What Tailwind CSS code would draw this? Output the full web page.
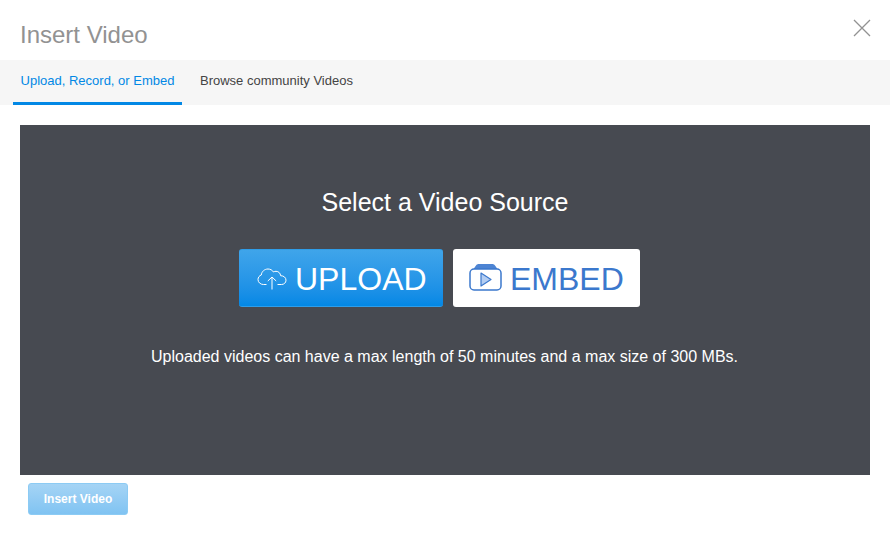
<!DOCTYPE html>
<html>
<head>
<meta charset="utf-8">
<script src="https://cdn.jsdelivr.net/npm/@tailwindcss/browser@4"></script>
</head>
<body class="bg-white font-['Liberation_Sans',Arial,sans-serif]">
<div class="w-[890px] h-[543px] overflow-hidden flex flex-col bg-white">
  <header class="h-[60px] flex justify-between pl-5 pr-[19px]">
    <h1 class="text-[24px] leading-[28px] pt-[21px] text-[#929292]">Insert Video</h1>
    <button class="mt-[19px] w-[18px] h-[18px]" aria-label="Close">
      <svg viewBox="0 0 18 18" class="w-[18px] h-[18px]" fill="none" stroke="#929292" stroke-width="1.3"><path d="M1 1 17 17M17 1 1 17"/></svg>
    </button>
  </header>
  <nav class="h-[45px] bg-[#f6f6f6] flex pl-[13px] text-[13px]">
    <a class="w-[169px] h-[45px] border-b-[3px] border-[#0288e5] text-[#0288e5] flex items-center justify-center pb-[1px]">Upload, Record, or Embed</a>
    <a class="ml-[18px] h-[45px] text-[#444] flex items-center pb-[4px]">Browse community Videos</a>
  </nav>
  <main class="mt-5 mx-5 w-[850px] h-[350px] bg-[#474a51] flex flex-col items-center pt-[62px] text-white">
    <h2 class="text-[25px] leading-[30px]">Select a Video Source</h2>
    <div class="flex gap-[10px] mt-[32px] mr-[11px]">
      <button class="w-[204px] h-[58px] rounded-[3px] border-y border-[#2f9de8] bg-gradient-to-b from-[#3fa5ea] to-[#0288e5] flex items-center pl-[18px] gap-[9px] text-[32px]">
        <svg viewBox="0 0 30 24" class="w-[30px] h-[24px]" fill="none" stroke="#fff" stroke-width="1">
          <path d="M9.5 18.5H6.5C3.5 18.5 1 16.4 1 13.6 1 11.3 2.4 9.6 4.3 9 4.6 5.7 7.4 3 11 3 13.3 3 15.4 4.2 16.5 6 17.300 5.500 18.200 5.300 19 5.300 21.600 5.300 23.500 7.300 23.600 9.700 26.700 9.700 29 11.500 29 14.200 29 16.700 27 18.500 24.500 18.500H20.500"/>
          <path d="M15 23.500V11M10.800 15 15 11 19.200 15"/>
        </svg>
        <span class="pt-[1px] -ml-[1px]">UPLOAD</span>
      </button>
      <button class="w-[187px] h-[58px] rounded-[3px] bg-white flex items-center pl-[16px] gap-[9px] text-[32px] text-[#3b78cd]">
        <svg viewBox="0 0 33 28" class="w-[33px] h-[28px] -mt-[2px]" fill="none">
          <path d="M4.500 6 7 2.500C7.700 1.500 8.500 1 10 1H23C24.500 1 25.300 1.500 26 2.500L28.500 6Z" fill="#4d84d3"/>
          <rect x="1" y="6" width="31" height="21" rx="4" stroke="#3b78cd" stroke-width="1.500" fill="#fff"/>
          <path d="M12 10 22 16.500 12 23Z" fill="#b3cdf2" stroke="#3b78cd" stroke-width="1.200" stroke-linejoin="round"/>
        </svg>
        <span class="pt-[1px] -ml-[1px]">EMBED</span>
      </button>
    </div>
    <p class="text-[16px] leading-[20px] mt-[40px] mr-[1px]">Uploaded videos can have a max length of 50 minutes and a max size of 300 MBs.</p>
  </main>
  <div class="pl-[28px] pt-2">
    <button class="w-[100px] h-[32px] rounded-[3px] border border-[#8ccbf4] bg-gradient-to-b from-[#a5d4f5] to-[#80c3f2] text-white font-bold text-[12px]">Insert Video</button>
  </div>
</div>
</body>
</html>
